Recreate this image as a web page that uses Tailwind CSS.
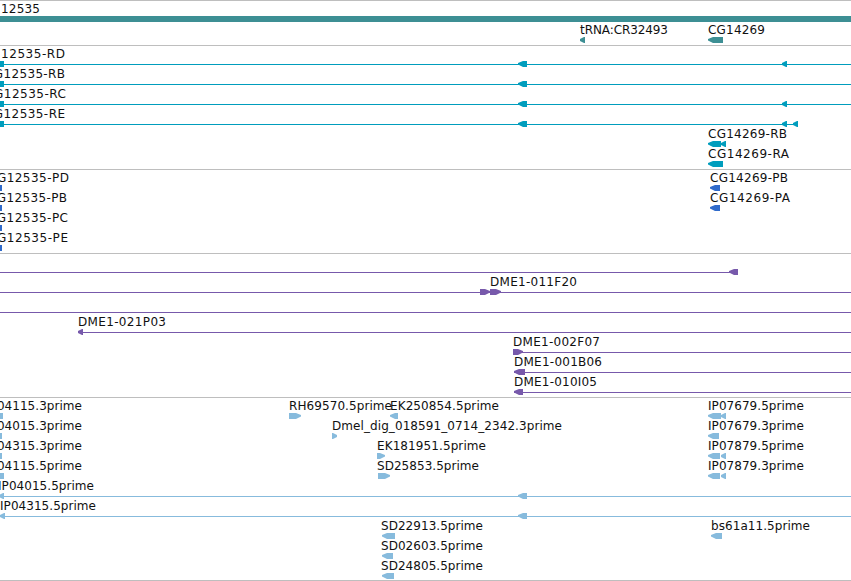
<!DOCTYPE html>
<html lang="en">
<head>
<meta charset="utf-8">
<title>Genome browser tracks</title>
<script src="https://cdn.jsdelivr.net/npm/@tailwindcss/browser@4"></script>
</head>
<body class="bg-white overflow-hidden">
<main id="tracks" class="flex flex-col w-[851px] h-[581px] overflow-hidden font-['DejaVu_Sans',sans-serif]"></main>
<script>
// Row: { y: label baseline inside the track, t: [[text, x, width]], l: [[x1, x2]], g: [[kind, x1, x2]] }
// Glyph kinds: b = block, L = left-pointing, R = right-pointing
const tracks = [
  { box: 'w-full h-[45px] border-t border-[#bebebe]', ink: 'fill-[#3d8f94]', h: 45, rows: [
    { y: 13, t: [['12535', 1, 39]], g: [['b', 0, 851]] },
    { y: 34, t: [['tRNA:CR32493', 580, 88], ['CG14269', 708, 57]], g: [['L', 580, 585], ['L', 708, 723]] }
  ]},
  { box: 'w-full h-[124px] border-t border-[#bebebe]', ink: 'fill-[#009dbd]', h: 124, rows: [
    { y: 13, t: [['12535-RD', 1, 64]], l: [[0, 851]], g: [['b', 0, 4], ['L', 518, 527], ['L', 782, 787]] },
    { y: 33, t: [['CG12535-RB', -15, 80]], l: [[0, 851]], g: [['b', 0, 4], ['L', 518, 527]] },
    { y: 53, t: [['CG12535-RC', -15, 81]], l: [[0, 851]], g: [['b', 0, 4], ['L', 518, 527], ['L', 782, 787]] },
    { y: 73, t: [['CG12535-RE', -15, 80]], l: [[0, 798]], g: [['b', 0, 4], ['L', 518, 527], ['L', 782, 787], ['L', 793, 798]] },
    { y: 93, t: [['CG14269-RB', 708, 79]], g: [['L', 708, 721], ['L', 721, 726]] },
    { y: 113, t: [['CG14269-RA', 708, 81]], g: [['L', 708, 723]] }
  ]},
  { box: 'w-full h-[84px] border-t border-[#bebebe]', ink: 'fill-[#306bcb]', h: 84, rows: [
    { y: 13, t: [['CG12535-PD', -12, 81], ['CG14269-PB', 710, 78]], g: [['b', 0, 2], ['L', 710, 720]] },
    { y: 33, t: [['CG12535-PB', -12, 79], ['CG14269-PA', 710, 80]], g: [['b', 0, 2], ['L', 710, 720]] },
    { y: 53, t: [['CG12535-PC', -12, 80]], g: [['b', 0, 2]] },
    { y: 73, t: [['CG12535-PE', -12, 80]], g: [['b', 0, 2]] }
  ]},
  { box: 'w-full h-[144px] border-t border-[#bebebe]', ink: 'fill-[#7759ab]', h: 144, rows: [
    { y: 13, l: [[0, 738]], g: [['L', 729, 738]] },
    { y: 33, t: [['DME1-011F20', 490, 87]], l: [[0, 851]], g: [['R', 480, 490], ['R', 490, 501]] },
    { y: 53, l: [[0, 851]] },
    { y: 73, t: [['DME1-021P03', 78, 88]], l: [[78, 851]], g: [['L', 78, 83]] },
    { y: 93, t: [['DME1-002F07', 513, 87]], l: [[513, 851]], g: [['R', 513, 523]] },
    { y: 113, t: [['DME1-001B06', 514, 88]], l: [[514, 851]], g: [['L', 514, 525]] },
    { y: 133, t: [['DME1-010I05', 514, 83]], l: [[514, 851]], g: [['L', 514, 523]] }
  ]},
  { box: 'w-full h-[184px] border-y border-[#bebebe]', ink: 'fill-[#87bbdd]', h: 183, rows: [
    { y: 13, t: [['IP04115.3prime', -14, 96], ['RH69570.5prime', 289, 103], ['EK250854.5prime', 390, 109], ['IP07679.5prime', 708, 96]], g: [['b', 0, 3], ['R', 289, 301], ['L', 390, 398], ['L', 708, 721], ['L', 721, 726]] },
    { y: 33, t: [['IP04015.3prime', -14, 96], ['Dmel_dig_018591_0714_2342.3prime', 332, 230], ['IP07679.3prime', 708, 96]], g: [['b', 0, 2], ['R', 332, 337], ['L', 708, 719]] },
    { y: 53, t: [['IP04315.3prime', -14, 96], ['EK181951.5prime', 377, 109], ['IP07879.5prime', 708, 96]], g: [['b', 0, 2], ['R', 377, 385], ['L', 708, 720], ['L', 721, 726]] },
    { y: 73, t: [['IP04115.5prime', -14, 96], ['SD25853.5prime', 377, 102], ['IP07879.3prime', 708, 96]], g: [['b', 0, 4], ['R', 378, 390], ['L', 708, 720], ['L', 721, 726]] },
    { y: 93, t: [['IP04015.5prime', -2, 96]], l: [[0, 851]], g: [['L', -1, 4], ['L', 518, 527]] },
    { y: 113, t: [['IP04315.5prime', 0, 96]], l: [[0, 851]], g: [['L', 0, 5], ['L', 518, 527]] },
    { y: 133, t: [['SD22913.5prime', 381, 102], ['bs61a11.5prime', 711, 99]], g: [['L', 382, 395], ['L', 711, 722]] },
    { y: 153, t: [['SD02603.5prime', 381, 102]], g: [['L', 382, 393]] },
    { y: 173, t: [['SD24805.5prime', 381, 102]], g: [['L', 382, 394]] }
  ]}
];

function glyph([kind, a, b], y) {
  const top = y + 3, mid = y + 6, bottom = y + 9;
  if (kind === 'b') return `<rect x="${a}" y="${top}" width="${b - a}" height="6"/>`;
  const tip = kind === 'L' ? a : b;
  const tail = kind === 'L' ? b : a;
  const dir = kind === 'L' ? 1 : -1;
  if (b - a < 6) {
    return `<polygon points="${tip},${mid - 1} ${tail - dir},${top} ${tail},${top} ${tail},${bottom} ${tail - dir},${bottom} ${tip},${mid + 1}"/>`;
  }
  const shoulder = tip + dir * 5;
  return `<polygon points="${tip},${mid - 1} ${shoulder},${top} ${tail},${top} ${tail},${bottom} ${shoulder},${bottom} ${tip},${mid + .5}"/>`;
}

document.getElementById('tracks').innerHTML = tracks.map(track => {
  // The one-pixel top border shifts drawing coordinates inside each track.
  const rows = track.rows.map(({ y, t = [], l = [], g = [] }) => {
    const base = y - 1;
    return l.map(([a, b]) => `<rect x="${a}" y="${base + 6}" width="${b - a}" height="1"/>`).join('')
      + g.map(item => glyph(item, base)).join('')
      + t.map(([text, x, w]) => `<text x="${x}" y="${base}" textLength="${w}" class="fill-[#111111] text-[12px]">${text}</text>`).join('');
  }).join('');
  return `<section class="${track.box} shrink-0"><svg width="851" height="${track.h - 1}" class="block ${track.ink}">${rows}</svg></section>`;
}).join('');
</script>
</body>
</html>
